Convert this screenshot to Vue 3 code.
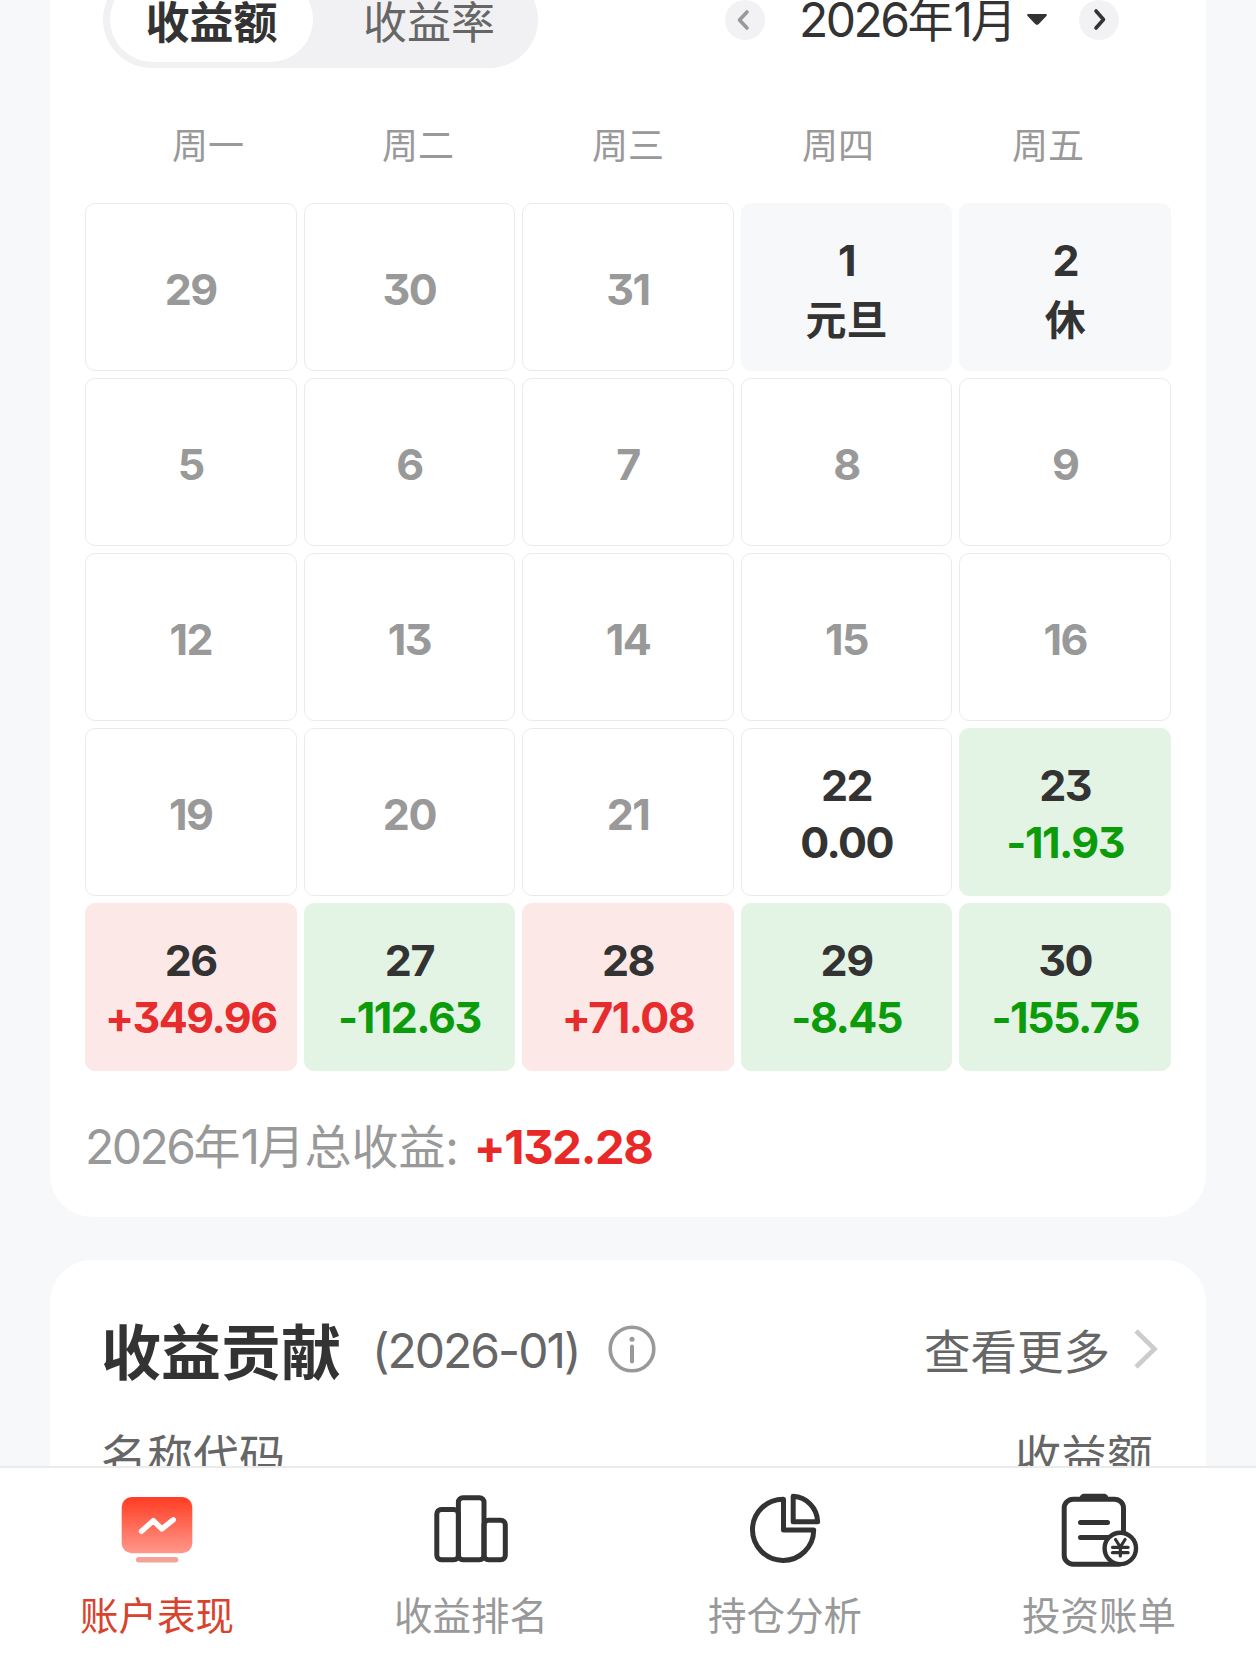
<template>
  <div class="page">
    <main class="content">
      <!-- 收益日历 -->
      <section class="card calendar-card">
        <div class="toolbar">
          <div class="switch">
            <button
              v-for="tab in modes"
              :key="tab"
              class="switch-item"
              :class="{ active: tab === mode }"
              @click="mode = tab"
            >{{ tab }}</button>
          </div>
          <div class="month-nav">
            <button class="nav-btn disabled">
              <svg width="40" height="40" viewBox="0 0 40 40">
                <path d="M22 12l-7.5 8 7.5 8" />
              </svg>
            </button>
            <div class="month">
              <span><i class="num">2026</i>年<i class="num">1</i>月</span>
              <svg class="caret" width="20" height="12" viewBox="0 0 20 12">
                <path d="M1.5 0h17c1.3 0 1.7 1 .9 1.9l-7.6 8.2c-1 1.1-2.6 1.1-3.6 0L.6 1.9C-.2 1 .2 0 1.5 0z" fill="#333" />
              </svg>
            </div>
            <button class="nav-btn">
              <svg width="40" height="40" viewBox="0 0 40 40">
                <path d="M17 11l7.500 8.500-7.500 8.500" />
              </svg>
            </button>
          </div>
        </div>

        <div class="weekdays">
          <span v-for="name in weekdays" :key="name">{{ name }}</span>
        </div>

        <div class="days">
          <div v-for="(item, index) in days" :key="index" class="day" :class="item.type">
            <span>{{ item.day }}</span>
            <span v-if="item.text" class="value" :class="{ holiday: item.type === 'rest' }">{{ item.text }}</span>
          </div>
        </div>

        <div class="summary">
          <span class="summary-label"><i class="num">2026</i>年<i class="num">1</i>月总收益:</span>
          <span class="summary-value">+132.28</span>
        </div>
      </section>

      <!-- 收益贡献 -->
      <section class="card contribution">
        <div class="contribution-head">
          <h2>收益贡献</h2>
          <span class="period num">(2026-01)</span>
          <svg class="info" width="48" height="48" viewBox="0 0 48 48">
            <circle cx="24" cy="24" r="21.8" fill="none" stroke="#999" stroke-width="3.6" />
            <circle cx="24" cy="14.3" r="2.5" fill="#999" />
            <path d="M24 21.5v15" stroke="#999" stroke-width="4" stroke-linecap="round" />
          </svg>
          <span class="more">查看更多</span>
          <svg class="arrow" width="24" height="40" viewBox="0 0 24 40">
            <path d="M2 2l18.5 18L2 38" fill="none" stroke="#ccc" stroke-width="4.6" />
          </svg>
        </div>
        <div class="table-head">
          <span>名称代码</span>
          <span>收益额</span>
        </div>
      </section>
    </main>

    <!-- 底部导航 -->
    <nav class="tabbar">
      <a class="tab active">
        <svg width="80" height="80" viewBox="0 0 80 80">
          <defs>
            <linearGradient id="screen" x1="0" y1="0" x2="0" y2="1">
              <stop offset="0.05" stop-color="#ff4027" />
              <stop offset="1" stop-color="#ff998c" />
            </linearGradient>
          </defs>
          <rect x="4.700" y="7" width="70.600" height="56.300" rx="10" fill="url(#screen)" />
          <rect x="19" y="67" width="42.300" height="5.400" rx="2.700" fill="#f4a297" />
          <path d="M24.500 41.300l11.800-10.600 8.700 8.300 11.200-9.200" fill="none" stroke="#fff" stroke-width="5.400" stroke-linecap="round" stroke-linejoin="round" />
        </svg>
        <span>账户表现</span>
      </a>
      <a class="tab">
        <svg class="line-icon" width="80" height="80" viewBox="0 0 80 80">
          <rect x="5.800" y="19.500" width="21.600" height="50.300" rx="4.500" />
          <rect x="27.400" y="7.800" width="25.600" height="62" rx="4.500" />
          <rect x="53" y="30.300" width="21.300" height="39.500" rx="4.500" />
        </svg>
        <span>收益排名</span>
      </a>
      <a class="tab">
        <svg class="line-icon" width="80" height="80" viewBox="0 0 80 80">
          <path d="M38.500 9.200V40h30.200A30.600 30.600 0 1 1 38.500 9.200z" />
          <path d="M48.200 6.300v25.400h24.400A26 26 0 0 0 48.200 6.300z" />
        </svg>
        <span>持仓分析</span>
      </a>
      <a class="tab">
        <svg class="line-icon" width="80" height="80" viewBox="0 0 80 80">
          <path d="M64.500 43V18.200a9 9 0 0 0-9-9h-41.300a9 9 0 0 0-9 9v47a9 9 0 0 0 9 9H60" />
          <path d="M20.500 9.500c0-3.500 1.500-5.800 4.500-5.800h20c3 0 4.500 2.300 4.500 5.800z" fill="#333" stroke="none" />
          <path d="M21.500 32.400h27M21.500 47.400h29" />
          <circle cx="61.300" cy="58.400" r="15.700" fill="#fff" stroke-width="4.400" />
          <!-- 人民币符号 -->
          <path d="M56.500 49.500l4.800 7.500 4.800-7.500M61.300 57v9M53.500 57.300h15.600M53.500 62.700h15.600" stroke-width="3.200" />
        </svg>
        <span>投资账单</span>
      </a>
    </nav>
  </div>
</template>

<script setup>
import { ref } from 'vue'

const modes = ['收益额', '收益率']
const mode = ref('收益额')

const weekdays = ['周一', '周二', '周三', '周四', '周五']

// 没有收益数据的日期显示为灰色
const emptyDays = (list) => list.map((day) => ({ day, type: 'empty' }))

const days = [
  ...emptyDays([29, 30, 31]),
  { day: 1, text: '元旦', type: 'rest' },
  { day: 2, text: '休', type: 'rest' },
  ...emptyDays([5, 6, 7, 8, 9, 12, 13, 14, 15, 16, 19, 20, 21]),
  { day: 22, text: '0.00', type: 'flat' },
  { day: 23, text: '-11.93', type: 'down' },
  { day: 26, text: '+349.96', type: 'up' },
  { day: 27, text: '-112.63', type: 'down' },
  { day: 28, text: '+71.08', type: 'up' },
  { day: 29, text: '-8.45', type: 'down' },
  { day: 30, text: '-155.75', type: 'down' }
]
</script>

<style>
body {
  margin: 0;
  background: #f6f8fa;
}
</style>

<style scoped>
.page {
  display: flex;
  flex-direction: column;
  width: 1256px;
  height: 1660px;
  overflow: hidden;
  background: #f6f8fa;
  color: #333;
  font-family: "Noto Sans CJK SC", sans-serif;
}

.content {
  flex: 1;
  min-height: 0;
  overflow: hidden;
}

.card {
  box-sizing: border-box;
  margin: 0 50px;
  background: #fff;
  border-radius: 42px;
}

button {
  padding: 0;
  border: none;
  font-family: inherit;
  color: inherit;
}

.num {
  font-family: Inter, "Noto Sans CJK SC", sans-serif;
  font-size: 48px;
  font-style: normal;
  letter-spacing: -2.5px;
}

/* 日历卡片 */
.calendar-card {
  height: 1246px;
  margin-top: -29px;
  padding: 0 35px;
  border-radius: 0 0 42px 42px;
}

.toolbar {
  display: flex;
  justify-content: space-between;
  align-items: center;
  height: 97px;
  padding: 0 52px 0 18px;
}

.switch {
  display: flex;
  box-sizing: border-box;
  width: 435px;
  height: 97px;
  padding: 6px 7px;
  border-radius: 49px;
  background: #f1f1f4;
}

.switch-item {
  width: 203px;
  border-radius: 43px;
  background: transparent;
  font-size: 44px;
  line-height: 84px;
  color: #666;
}

.switch-item + .switch-item {
  width: 218px;
  padding-left: 14px;
}

.switch-item.active {
  background: #fff;
  font-weight: 700;
  color: #333;
}

.month-nav {
  display: flex;
  align-items: center;
}

.nav-btn {
  width: 40px;
  height: 40px;
  border-radius: 50%;
  background: #f2f2f4;
}

.nav-btn svg {
  display: block;
  fill: none;
  stroke: #333;
  stroke-width: 3.6;
  stroke-linecap: round;
  stroke-linejoin: round;
}

.nav-btn.disabled svg {
  stroke: #999;
}

.month {
  display: flex;
  justify-content: space-between;
  align-items: center;
  width: 248px;
  margin: 0 32px 0 34px;
  font-size: 46px;
  line-height: 60px;
  white-space: nowrap;
}

.month span {
  margin-top: -3px;
}

.weekdays {
  display: grid;
  grid-template-columns: repeat(5, 210px);
  margin: 46px 18px 0;
  font-size: 36px;
  line-height: 58px;
  text-align: center;
  color: #999;
}

.days {
  display: grid;
  grid-template-columns: repeat(5, 1fr);
  grid-auto-rows: 168px;
  gap: 7px;
  margin-top: 31px;
}

.day {
  display: flex;
  flex-direction: column;
  align-items: center;
  justify-content: center;
  box-sizing: border-box;
  padding-top: 4px;
  border: 1px solid #ebebeb;
  border-radius: 10px;
  font-family: Inter, "Noto Sans CJK SC", sans-serif;
  font-size: 43px;
  font-weight: 700;
  font-feature-settings: "cv09";
  letter-spacing: -1.5px;
  line-height: 57px;
}

.day.empty {
  color: #999;
}

.day.rest {
  border-color: #f7f8fa;
  background: #f7f8fa;
}

.day.up {
  border-color: #fde8e8;
  background: #fde8e8;
}

.day.down {
  border-color: #e3f4e4;
  background: #e3f4e4;
}

.up .value {
  color: #e62c2c;
}

.down .value {
  color: #0b9b0b;
}

.value.holiday {
  padding-top: 3px;
  margin-bottom: -3px;
  font-size: 41px;
  letter-spacing: 0;
}

.summary {
  display: flex;
  align-items: center;
  gap: 15px;
  height: 70px;
  margin-top: 41px;
  font-size: 47px;
  line-height: 70px;
}

.summary-label {
  margin-top: -3px;
  color: #999;
}

.summary-value {
  font-family: Inter, sans-serif;
  font-weight: 700;
  font-feature-settings: "cv09";
  letter-spacing: -1.3px;
  color: #e92828;
}

/* 收益贡献卡片 */
.contribution {
  height: 400px;
  margin-top: 43px;
  padding: 44px 48px 0 51px;
}

.contribution-head {
  display: flex;
  align-items: center;
  height: 90px;
}

h2 {
  margin: 0;
  font-size: 60px;
  line-height: 90px;
  font-weight: 700;
}

.period {
  margin: 2px 0 0 31px;
  letter-spacing: -2px;
  color: #666;
}

.info {
  margin-left: 28px;
}

.more {
  margin: -2px 0 0 auto;
  font-size: 46.5px;
  color: #666;
}

.arrow {
  margin-left: 24px;
}

.table-head {
  display: flex;
  justify-content: space-between;
  margin-top: 24px;
  padding-right: 5px;
  font-size: 46px;
  line-height: 70px;
  color: #666;
}

/* 底部导航 */
.tabbar {
  display: flex;
  box-sizing: border-box;
  height: 194px;
  border-top: 2px solid #ebebeb;
  background: #fff;
}

.tab {
  display: flex;
  flex: 1;
  flex-direction: column;
  align-items: center;
  padding-top: 22px;
  font-size: 38.5px;
  line-height: 56px;
  color: #999;
}

.tab span {
  margin-top: 15px;
}

.tab.active {
  color: #d8432e;
}

.line-icon {
  fill: none;
  stroke: #333;
  stroke-width: 5;
  stroke-linecap: round;
  stroke-linejoin: round;
}
</style>
